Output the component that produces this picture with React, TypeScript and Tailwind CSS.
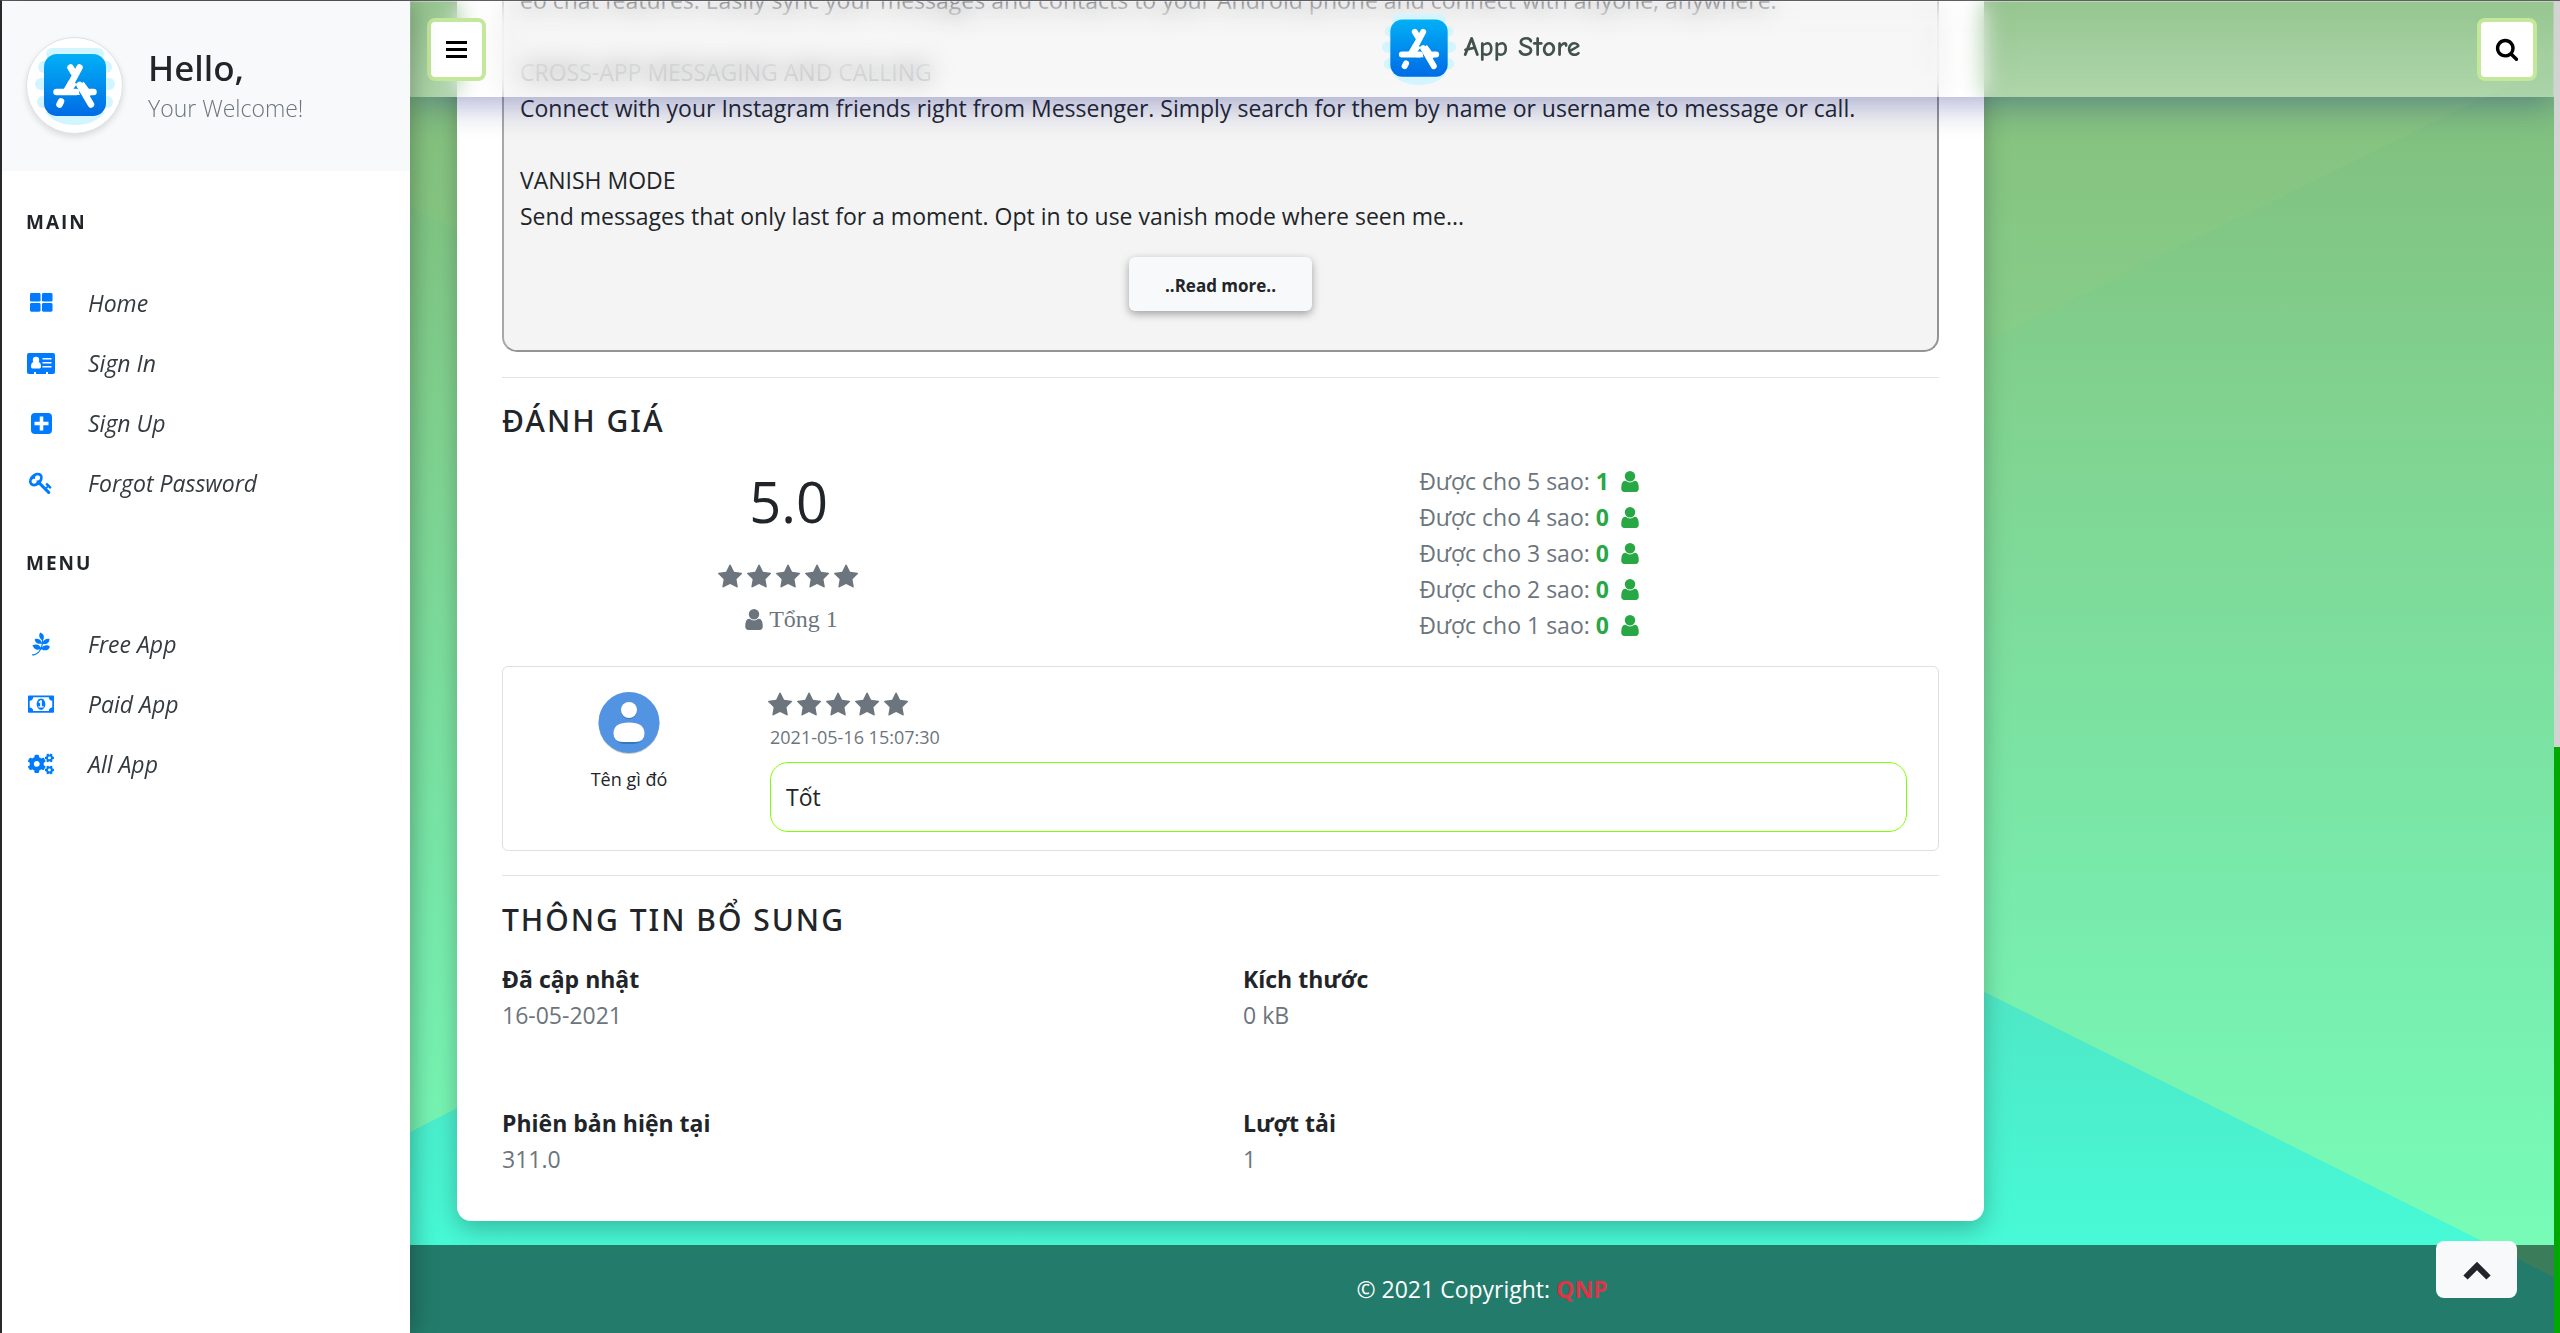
import React from "react";
import { FaCogs, FaPagelines } from "react-icons/fa";

const STAR =
  "M1664 647q0 22-26 48l-363 354 86 500q1 7 1 20 0 21-10.5 35.5t-30.5 14.5q-19 0-40-12l-449-236-449 236q-22 12-40 12-21 0-31.5-14.5t-10.5-35.5q0-6 2-20l86-500-364-354q-25-27-25-48 0-37 56-46l502-73 225-455q19-41 49-41t49 41l225 455 502 73q56 9 56 46z";
const USER =
  "M1536 1399q0 109-62.5 187t-150.5 78h-854q-88 0-150.5-78t-62.5-187q0-85 8.5-160.5t31.5-152 58.5-131 94-89 134.5-34.5q131 128 313 128t313-128q76 0 134.5 34.5t94 89 58.5 131 31.5 152 8.5 160.5zm-256-887q0 159-112.5 271.5t-271.5 112.5-271.5-112.5-112.5-271.5 112.5-271.5 271.5-112.5 271.5 112.5 112.5 271.5z";
const SEARCH =
  "M1216 832q0-185-131.5-316.5t-316.5-131.5-316.5 131.5-131.5 316.5 131.5 316.5 316.5 131.5 316.5-131.5 131.5-316.5zm512 832q0 52-38 90t-90 38q-54 0-90-38l-343-342q-179 124-399 124-143 0-273.5-55.5t-225-150-150-225-55.5-273.5 55.5-273.5 150-225 225-150 273.5-55.5 273.5 55.5 225 150 150 225 55.5 273.5q0 220-124 399l343 343q37 37 37 90z";
const KEY =
  "M832 512q0-80-56-136t-136-56-136 56-56 136q0 42 19 83-41-19-83-19-80 0-136 56t-56 136 56 136 136 56 136-56 56-136q0-42-19-83 41 19 83 19 80 0 136-56t56-136zm851 704q0 17-49 66t-66 49q-9 0-28.5-16t-36.5-33-38.5-40-24.5-26l-96 96 220 220q28 28 28 68 0 42-39 81t-81 39q-40 0-68-28l-671-671q-176 131-365 131-163 0-265.5-102.5t-102.5-265.5q0-160 95-313t248-248 313-95q163 0 265.5 102.5t102.5 265.5q0 189-131 365l355 355 96-96q-3-3-26-24.5t-40-38.5-33-36.5-16-28.5q0-17 49-66t66-49q13 0 23 10 6 6 46 44.5t82 79.5 86.5 86 73 78 28.5 41z";
const MONEY =
  "M768 1152h384v-96h-128v-448h-114l-148 137 77 80q42-37 55-57h2v288h-128v96zm512-256q0 70-21 142t-59.5 134-101.5 101-138 39-138-39-101.5-101-59.5-134-21-142 21-142 59.5-134 101.5-101 138-39 138 39 101.5 101 59.5 134 21 142zm512 256v-512q-106 0-181-75t-75-181h-1152q0 106-75 181t-181 75v512q106 0 181 75t75 181h1152q0-106 75-181t181-75zm128-832v1152q0 26-19 45t-45 19h-1792q-26 0-45-19t-19-45v-1152q0-26 19-45t45-19h1792q26 0 45 19t19 45z";

function Glyph({ d, className, box = "0 0 1792 1792" }: { d: string; className: string; box?: string }) {
  return (
    <svg viewBox={box} className={className} fill="currentColor" aria-hidden="true">
      <path d={d} />
    </svg>
  );
}

function Person({ className }: { className: string }) {
  return <Glyph d={USER} box="256 128 1280 1536" className={className} />;
}

function AppLogo({ id, className }: { id: string; className: string }) {
  return (
    <svg viewBox="0 0 80 80" className={className} aria-hidden="true">
      <defs>
        <linearGradient id={id} x1="0" y1="0" x2="0" y2="1">
          <stop offset="0" stopColor="#02b0f5" />
          <stop offset="1" stopColor="#006be6" />
        </linearGradient>
      </defs>
      <g fill="#d2f5ff">
        <rect x="11" y="2" width="58" height="12" rx="6" />
        <rect x="3" y="15" width="74" height="12" rx="6" />
        <rect x="0" y="32" width="80" height="12" rx="6" />
        <rect x="2" y="50" width="76" height="12" rx="6" />
        <path d="M10 66h60q-10 13-30 13t-30-13z" />
      </g>
      <rect x="9" y="8" width="62" height="62" rx="13" fill={`url(#${id})`} />
      <g stroke="#fff" strokeWidth="6.5" strokeLinecap="round" fill="none">
        <path d="M44.500 21.500 33 43" />
        <path d="M35.500 21.500l3 5" />
        <path d="M21.500 46H41" />
        <path d="M55 46h3.500" />
        <path d="M44.500 39 56 58.500" />
        <path d="M26 55.500l-1.500 3" />
      </g>
      <path d="M34 34l8 4-6 8h-9z" fill="#fff" />
      <path d="M37 49h8l-3-6z" fill="#fff" />
      <path d="M47 37l9 12" stroke="#fff" strokeWidth="4" />
    </svg>
  );
}

const icons: Record<string, React.ReactNode> = {
  home: (
    <svg viewBox="0 0 24 20" className="w-[23px]" fill="currentColor">
      <rect width="11" height="9" rx="1.500" />
      <rect x="12.500" width="11" height="9" rx="1.500" />
      <rect y="10.500" width="11" height="9" rx="1.500" />
      <rect x="12.500" y="10.500" width="11" height="9" rx="1.500" />
    </svg>
  ),
  card: (
    <svg viewBox="0 0 28 21" className="w-7" fill="currentColor">
      <rect width="28" height="20" rx="2" />
      <rect y="17" width="28" height="4" rx="2" />
      <g fill="#fff">
        <circle cx="9" cy="7" r="3.200" />
        <path d="M4 13.500q0-4 2.500-4.500 2.500 2 5 0 2.500.5 2.500 4.500 0 2-1.500 2h-7Q4 15.500 4 13.500z" />
        <rect x="15.500" y="5" width="9" height="1.500" />
        <rect x="15.500" y="9" width="9" height="1.500" />
        <rect x="15.500" y="13" width="9" height="1.500" />
        <rect x="7" y="19" width="2" height="2" />
        <rect x="19" y="19" width="2" height="2" />
      </g>
    </svg>
  ),
  plus: (
    <svg viewBox="0 0 21 21" className="w-[21px]" fill="currentColor">
      <rect width="21" height="21" rx="4" />
      <path d="M10.500 3.500v14M3.500 10.500h14" stroke="#fff" strokeWidth="3.500" />
    </svg>
  ),
  key: <Glyph d={KEY} className="w-6" />,
  leaf: <FaPagelines className="h-6 w-6" />,
  money: <Glyph d={MONEY} box="0 0 1920 1792" className="w-[26px]" />,
  cogs: <FaCogs className="h-[26px] w-[26px]" />,
};

function NavGroup({ title, items }: { title: string; items: [string, string][] }) {
  return (
    <nav aria-label={title}>
      <h2 className="px-6 text-[19px] leading-6 font-bold tracking-[2px]">{title}</h2>
      <ul className="pt-[39px]">
        {items.map(([icon, label]) => (
          <li key={label}>
            <a href="#" className="flex h-[60px] items-center gap-[33px] px-[25px] text-[23px] text-[#343a40] italic">
              <span className="flex w-7 justify-center text-[#007bff]">{icons[icon]}</span>
              {label}
            </a>
          </li>
        ))}
      </ul>
    </nav>
  );
}

function Stars() {
  return (
    <div className="flex gap-[3px] text-[#6c757d]" role="img" aria-label="5 / 5">
      {[1, 2, 3, 4, 5].map((n) => (
        <Glyph key={n} d={STAR} className="h-[26px] w-[26px]" />
      ))}
    </div>
  );
}

function Background() {
  return (
    <svg
      className="absolute inset-0 -z-10 h-full w-full"
      viewBox="0 0 2144 1332"
      preserveAspectRatio="none"
      aria-hidden="true"
    >
      <defs>
        <linearGradient id="base" x1="0" y1="0" x2="0" y2="1">
          <stop offset="0" stopColor="#76b472" />
          <stop offset="0.100" stopColor="#81c180" />
          <stop offset="0.300" stopColor="#81d28f" />
          <stop offset="0.680" stopColor="#78ebac" />
          <stop offset="0.920" stopColor="#77fbb7" />
          <stop offset="1" stopColor="#77fbb7" />
        </linearGradient>
        <linearGradient id="teal" x1="0" y1="672" x2="0" y2="1332" gradientUnits="userSpaceOnUse">
          <stop offset="0.400" stopColor="#51e3c2" />
          <stop offset="0.850" stopColor="#47f9d6" />
        </linearGradient>
      </defs>
      <rect width="2144" height="1332" fill="url(#base)" />
      <path d="M0 0H2144V62L1574 342 921 660 0 206z" fill="#9acb80" opacity="0.200" />
      <path d="M921 664 2144 1276V1332H0V1131z" fill="url(#teal)" />
    </svg>
  );
}

function Fact({ label, value }: { label: string; value: string }) {
  return (
    <div className="h-[108px] text-[23px] leading-9">
      <dt className="font-bold">{label}</dt>
      <dd className="text-[#6c757d]">{value}</dd>
    </div>
  );
}

const ratings: [number, number][] = [[5, 1], [4, 0], [3, 0], [2, 0], [1, 0]];

export default function App() {
  return (
    <div className="flex min-h-screen border-t border-l-2 border-t-[#5f5d63] border-l-[#2c2e31] bg-white font-['Open_Sans',sans-serif] text-[#212529]">
      <aside className="relative z-20 w-[408px] shrink-0 bg-white shadow-[3px_0_24px_rgba(0,0,0,0.3)]">
        <div className="mb-[39px] flex h-[170px] items-start gap-[25px] bg-[#f8f9fa] px-6 pt-9">
          <div className="flex h-[97px] w-[97px] shrink-0 items-center justify-center rounded-full border border-[#dee2e6] bg-white shadow-[0_3px_6px_rgba(0,0,0,0.12)]">
            <AppLogo id="logo-side" className="h-20 w-20" />
          </div>
          <div className="pt-[9px]">
            <p className="font-['Noto_Sans',sans-serif] text-[35px] leading-[44px] font-medium">Hello,</p>
            <p className="text-[23px] leading-9 font-light text-[#6c757d]">Your Welcome!</p>
          </div>
        </div>
        <NavGroup
          title="MAIN"
          items={[["home", "Home"], ["card", "Sign In"], ["plus", "Sign Up"], ["key", "Forgot Password"]]}
        />
        <div className="h-[38px]" />
        <NavGroup title="MENU" items={[["leaf", "Free App"], ["money", "Paid App"], ["cogs", "All App"]]} />
      </aside>

      <div className="relative isolate flex min-w-0 flex-1 flex-col overflow-hidden">
        <Background />

        <header className="absolute inset-x-0 top-0 z-10 flex h-24 items-center justify-between px-[17px]">
          <div className="absolute inset-0 -z-10 shadow-[0_8px_32px_rgba(31,38,135,0.37)]" />
          <div className="absolute inset-0 -z-10 opacity-90 backdrop-blur-[12px]" />
          <div className="absolute inset-0 -z-10 border border-white/20 bg-linear-to-b from-white/20 to-white/35" />
          <button
            aria-label="Menu"
            className="flex h-[63px] w-[59px] items-center justify-center rounded-lg border-4 border-[#c3e79b] bg-white text-black"
          >
            <svg viewBox="0 0 21 17" className="w-[21px]" fill="currentColor">
              <rect width="21" height="3" />
              <rect y="7" width="21" height="3" />
              <rect y="14" width="21" height="3" />
            </svg>
          </button>
          <a href="#" className="flex items-center gap-[7px]">
            <AppLogo id="logo-top" className="h-[74px] w-[74px]" />
            <span className="pb-1 font-['Comic_Neue','Comic_Sans_MS',cursive] text-[28px] font-bold text-[#42524a]">
              App Store
            </span>
          </a>
          <button
            aria-label="Search"
            className="flex h-[63px] w-[60px] items-center justify-center rounded-lg border-4 border-[#c3e79b] bg-white text-black"
          >
            <Glyph d={SEARCH} className="h-6 w-6" />
          </button>
        </header>

        <main className="flex-1 pr-[570px] pb-6 pl-[47px]">
          <article className="-mt-[19px] rounded-b-[14px] bg-white px-[45px] pb-2 shadow-[0_8px_24px_rgba(0,0,0,0.25)]">
            <section className="rounded-b-[15px] border-2 border-t-0 border-[#949494] border-l-[#a8a8a8] bg-[#f4f4f4] px-4 pb-[39px] text-[23px] leading-9">
              <p>eo chat features. Easily sync your messages and contacts to your Android phone and connect with anyone, anywhere.</p>
              <br />
              <p>CROSS-APP MESSAGING AND CALLING</p>
              <p>Connect with your Instagram friends right from Messenger. Simply search for them by name or username to message or call.</p>
              <br />
              <p>VANISH MODE</p>
              <p>Send messages that only last for a moment. Opt in to use vanish mode where seen me...</p>
              <div className="flex justify-center pt-[23px]">
                <button className="h-[54px] w-[183px] rounded-md bg-[#f8f9fa] pt-1 text-[17px] font-bold shadow-[0_3px_8px_rgba(0,0,0,0.35)]">
                  ..Read more..
                </button>
              </div>
            </section>

            <section className="mt-[25px] border-t border-[#e2e3e4] pt-[25px]">
              <h2 className="font-['Noto_Sans',sans-serif] text-[30px] leading-9 font-medium tracking-[2px]">ĐÁNH GIÁ</h2>
              <div className="-mx-[22px] grid grid-cols-[5fr_7fr] pt-6">
                <div className="flex flex-col items-center">
                  <p className="text-[56px] leading-[76px]">5.0</p>
                  <div className="pt-[25px]">
                    <Stars />
                  </div>
                  <p className="flex items-center gap-1.5 pt-[11px] pl-1.5 font-['Liberation_Serif',serif] text-[24px] leading-9 text-[#6c757d]">
                    <Person className="h-[21px] w-[18px]" />
                    Tổng 1
                  </p>
                </div>
                <ul className="justify-self-center text-[23px] leading-9 text-[#6c757d]">
                  {ratings.map(([stars, count]) => (
                    <li key={stars} className="flex items-center gap-1.5">
                      <span>Được cho {stars} sao:</span>
                      <b className="text-[#28a745]">{count}</b>
                      <Person className="ml-1.5 h-[21px] w-[18px] text-[#28a745]" />
                    </li>
                  ))}
                </ul>
              </div>

              <div className="mt-[23px] grid grid-cols-[252px_1fr] gap-[15px] rounded-md border border-[#dfdfdf] pt-[25px] pr-[31px] pb-[18px]">
                <div className="flex flex-col items-center">
                  <svg viewBox="0 0 62 62" className="w-[62px]" aria-hidden="true">
                    <circle cx="31" cy="31.500" r="30.500" fill="#c9c9c9" />
                    <circle cx="31" cy="30.500" r="30.500" fill="#5294e2" />
                    <circle cx="31" cy="19" r="8" fill="#3b76bd" />
                    <rect x="15.500" y="32" width="31" height="20" rx="10" fill="#3b76bd" />
                    <circle cx="31" cy="18" r="8" fill="#fff" />
                    <path d="M31 30.500q15.500 0 15.500 11Q46.500 50 37 50H25q-9.500 0-9.500-8.500 0-11 15.500-11z" fill="#fff" />
                  </svg>
                  <p className="pt-[11px] text-[18px] leading-7">Tên gì đó</p>
                </div>
                <div>
                  <div className="-ml-0.5">
                    <Stars />
                  </div>
                  <p className="pt-[5px] text-[18px] leading-7 text-[#6c757d]">2021-05-16 15:07:30</p>
                  <p className="mt-[11px] rounded-[18px] border border-[#7fff00] px-[15px] py-4 text-[23px] leading-9">Tốt</p>
                </div>
              </div>
            </section>

            <section className="mt-6 border-t border-[#e2e3e4] pt-6">
              <h2 className="font-['Noto_Sans',sans-serif] text-[30px] leading-10 font-medium tracking-[2px]">
                THÔNG TIN BỔ SUNG
              </h2>
              <dl className="grid grid-cols-2 gap-x-[45px] gap-y-9 pt-[21px]">
                <Fact label="Đã cập nhật" value="16-05-2021" />
                <Fact label="Kích thước" value="0 kB" />
                <Fact label="Phiên bản hiện tại" value="311.0" />
                <Fact label="Lượt tải" value="1" />
              </dl>
            </section>
          </article>
        </main>

        <footer className="flex h-[88px] items-center justify-center bg-black/50 text-[23px] text-white">
          <p>
            © 2021 Copyright:{" "}
            <a href="#" className="font-bold text-[#dc3545]">
              QNP
            </a>
          </p>
        </footer>
        <button
          aria-label="Back to top"
          className="absolute right-[37px] bottom-[35px] flex h-[57px] w-[81px] items-center justify-center rounded-lg bg-[#f8f9fa]"
        >
          <svg viewBox="0 0 28 22" className="w-7" fill="none" stroke="currentColor" strokeWidth="6">
            <path d="M2.500 18.500 14 7l11.500 11.500" />
          </svg>
        </button>
      </div>

      <div className="flex w-[6px] shrink-0 flex-col bg-[#d3d3d3]" aria-hidden="true">
        <div className="mt-auto h-[44%] bg-[#00a900]" />
      </div>
    </div>
  );
}
